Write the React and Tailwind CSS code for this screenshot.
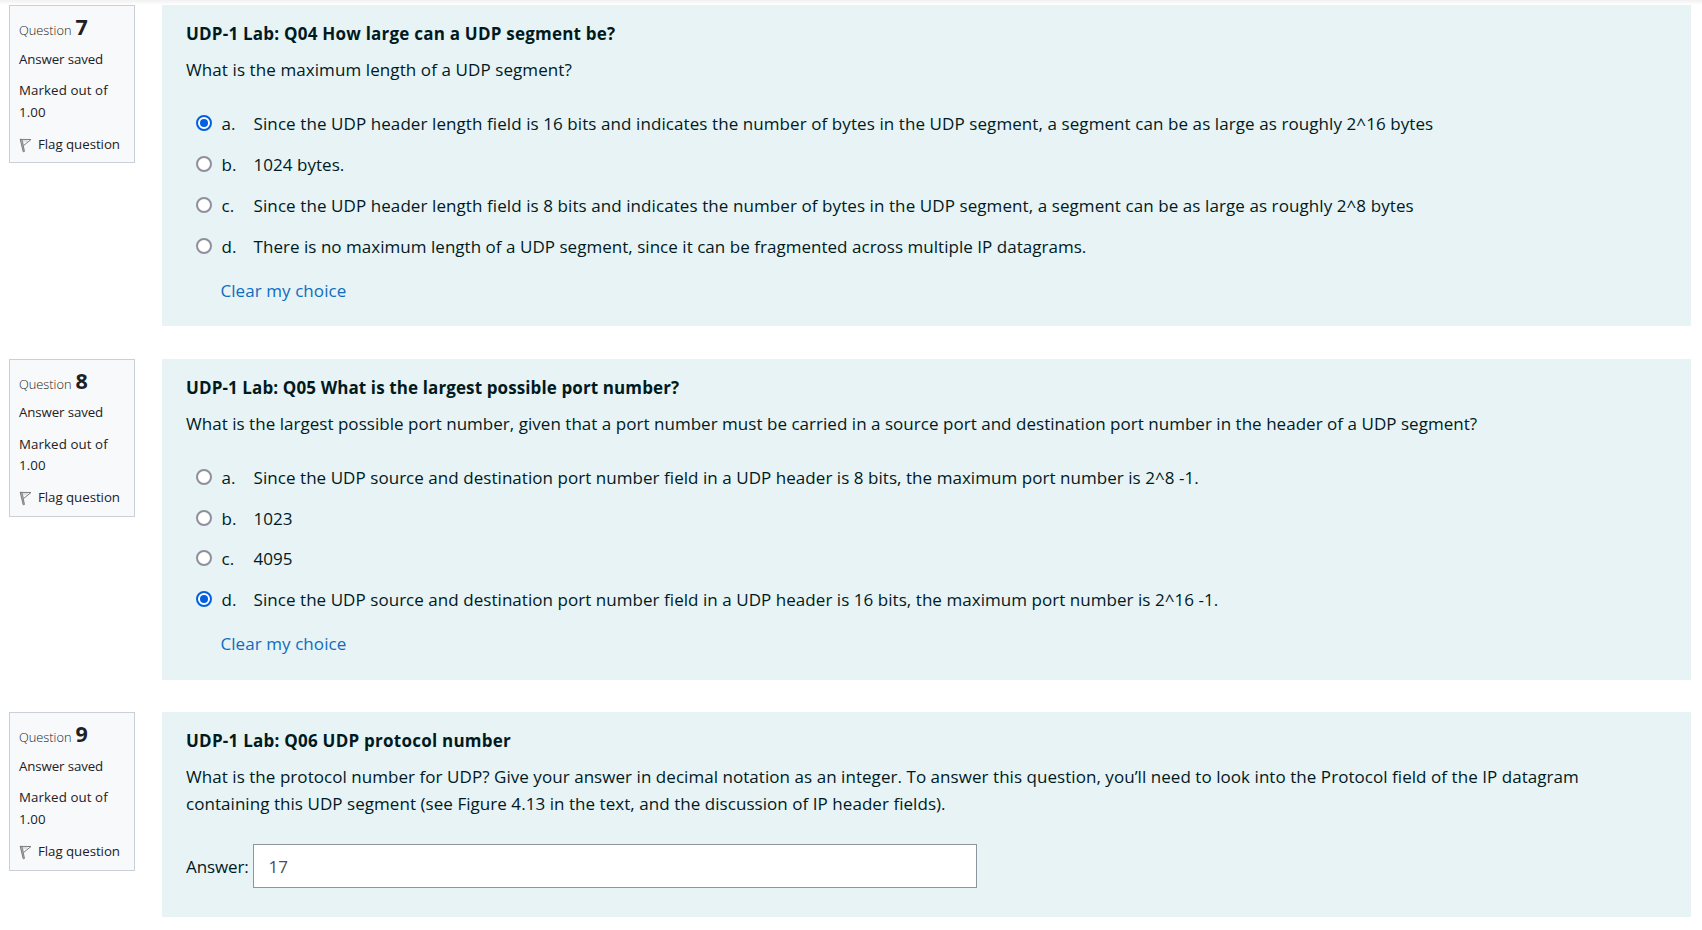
import React from "react";

const questions = [
  {
    number: 7,
    sideClass: "h-[158px]",
    savedClass: "mt-[11px]",
    markedClass: "mt-[9.6px]",
    flagClass: "mt-[10.3px]",
    panelClass: "h-[321px]",
    gapClass: "gap-[14px]",
    title: "UDP-1 Lab: Q04 How large can a UDP segment be?",
    titleClass: "tracking-[0.22px]",
    text: "What is the maximum length of a UDP segment?",
    textClass: "tracking-[0.09px]",
    selected: "a",
    options: [
      { key: "a", cls: "tracking-[0.083px]", label: "Since the UDP header length field is 16 bits and indicates the number of bytes in the UDP segment, a segment can be as large as roughly 2^16 bytes" },
      { key: "b", cls: "tracking-[0.03px]", label: "1024 bytes." },
      { key: "c", cls: "tracking-[0.083px]", label: "Since the UDP header length field is 8 bits and indicates the number of bytes in the UDP segment, a segment can be as large as roughly 2^8 bytes" },
      { key: "d", cls: "tracking-[0.03px]", label: "There is no maximum length of a UDP segment, since it can be fragmented across multiple IP datagrams." },
    ],
  },
  {
    number: 8,
    sideClass: "h-[158px]",
    savedClass: "mt-[10px]",
    markedClass: "mt-[10.4px]",
    flagClass: "mt-[9.5px]",
    panelClass: "h-[321px]",
    gapClass: "gap-[13.67px]",
    title: "UDP-1 Lab: Q05 What is the largest possible port number?",
    titleClass: "tracking-[0.11px]",
    text: "What is the largest possible port number, given that a port number must be carried in a source port and destination port number in the header of a UDP segment?",
    textClass: "tracking-[0.03px]",
    selected: "d",
    options: [
      { key: "a", cls: "tracking-[0.048px]", label: "Since the UDP source and destination port number field in a UDP header is 8 bits, the maximum port number is 2^8 -1." },
      { key: "b", cls: "tracking-[0.03px]", label: "1023" },
      { key: "c", cls: "tracking-[0.03px]", label: "4095" },
      { key: "d", cls: "tracking-[0.048px]", label: "Since the UDP source and destination port number field in a UDP header is 16 bits, the maximum port number is 2^16 -1." },
    ],
  },
  {
    number: 9,
    sideClass: "h-[159px]",
    savedClass: "mt-[11px]",
    markedClass: "mt-[10px]",
    flagClass: "mt-[10px]",
    panelClass: "h-[205px]",
    title: "UDP-1 Lab: Q06 UDP protocol number",
    titleClass: "tracking-[0.24px]",
    text: "What is the protocol number for UDP? Give your answer in decimal notation as an integer. To answer this question, you’ll need to look into the Protocol field of the IP datagram containing this UDP segment (see Figure 4.13 in the text, and the discussion of IP header fields).",
    textClass: "tracking-[0.05px]",
    answer: "17",
  },
];

function FlagIcon() {
  return (
    <svg className="mt-[4px] h-[15px] w-[13px] shrink-0" viewBox="0 0 13 15" fill="none" stroke="#7d7d7d" strokeWidth="1">
      <path d="M1.2 1.2 L4.2 13.8 L5.4 13.5 L3.2 1.8 Z" fill="#b4b4b4" />
      <path d="M1.2 1.4 L12 1.5 L5 7.2" />
      <path d="M3.4 3 L8.6 3" stroke="#c9c9c9" />
    </svg>
  );
}

function Radio({ checked }) {
  return (
    <span
      role="radio"
      aria-checked={checked}
      className={
        checked
          ? "flex size-4 shrink-0 items-center justify-center rounded-full border-2 border-[#0060df] bg-white"
          : "flex size-4 shrink-0 rounded-full border-2 border-[#8f8f9d] bg-white"
      }
    >
      {checked && <span className="size-2 rounded-full bg-[#0060df]" />}
    </span>
  );
}

function InfoCard({ q }) {
  return (
    <aside className={"w-[126px] shrink-0 border border-[#cad0d7] bg-[#f8f9fa] pt-[9.7px] pl-[9px] text-[13.3px] leading-[21.7px] text-[#1d2125] " + q.sideClass}>
      <h3 className="flex h-[22px] items-baseline gap-[4px] font-light">
        <span className="text-[12.8px]">Question</span>
        <span className="text-[21.5px] leading-[22px] font-bold">{q.number}</span>
      </h3>
      <div className={"tracking-[-0.12px] " + q.savedClass}>Answer saved</div>
      <div className={"w-[100px] tracking-[0.08px] " + q.markedClass}>Marked out of 1.00</div>
      <div className={"flex gap-[6px] tracking-[-0.05px] " + q.flagClass}>
        <FlagIcon />
        <span>Flag question</span>
      </div>
    </aside>
  );
}

function Question({ q }) {
  return (
    <section className="flex gap-[27px]">
      <InfoCard q={q} />
      <div className={"min-w-0 flex-1 bg-[#e7f3f5] pt-[15px] pl-6 text-[17px] leading-[27px] text-[#001a1e] " + q.panelClass}>
        <h4 className={"font-bold " + q.titleClass}>{q.title}</h4>
        <p className={"mt-[9px] w-[1410px] " + q.textClass}>{q.text}</p>
        {q.options ? (
          <>
            <div className={"mt-[27px] flex flex-col pl-[10px] " + q.gapClass}>
              {q.options.map((o) => (
                <label key={o.key} className="flex items-start">
                  <span className="flex h-[26px] items-center">
                    <Radio checked={q.selected === o.key} />
                  </span>
                  <span className="ml-[9.6px] w-8 shrink-0">{o.key}.</span>
                  <span className={"whitespace-nowrap " + o.cls}>{o.label}</span>
                </label>
              ))}
            </div>
            <a className="mt-[17px] block pl-[34.4px] tracking-[0.08px] text-[#0f6cbf]">Clear my choice</a>
          </>
        ) : (
          <div className="mt-[27px] flex items-center">
            <span className="w-[67px] tracking-[-0.12px]">Answer:</span>
            <div className="flex h-[44px] w-[724px] items-center border border-[#8f959e] bg-white pl-[14.5px] text-[#495057]">{q.answer}</div>
          </div>
        )}
      </div>
    </section>
  );
}

export default function App() {
  return (
    <main className="h-[930px] overflow-hidden bg-white font-['Open_Sans','Noto_Sans',sans-serif]">
      <div className="h-[5px] bg-linear-to-b from-[#f1f1f1] to-white" />
      <div className="flex flex-col pr-[11px] pl-[9px]">
        <Question q={questions[0]} />
        <div className="h-[33px]" />
        <Question q={questions[1]} />
        <div className="h-8" />
        <Question q={questions[2]} />
      </div>
    </main>
  );
}
